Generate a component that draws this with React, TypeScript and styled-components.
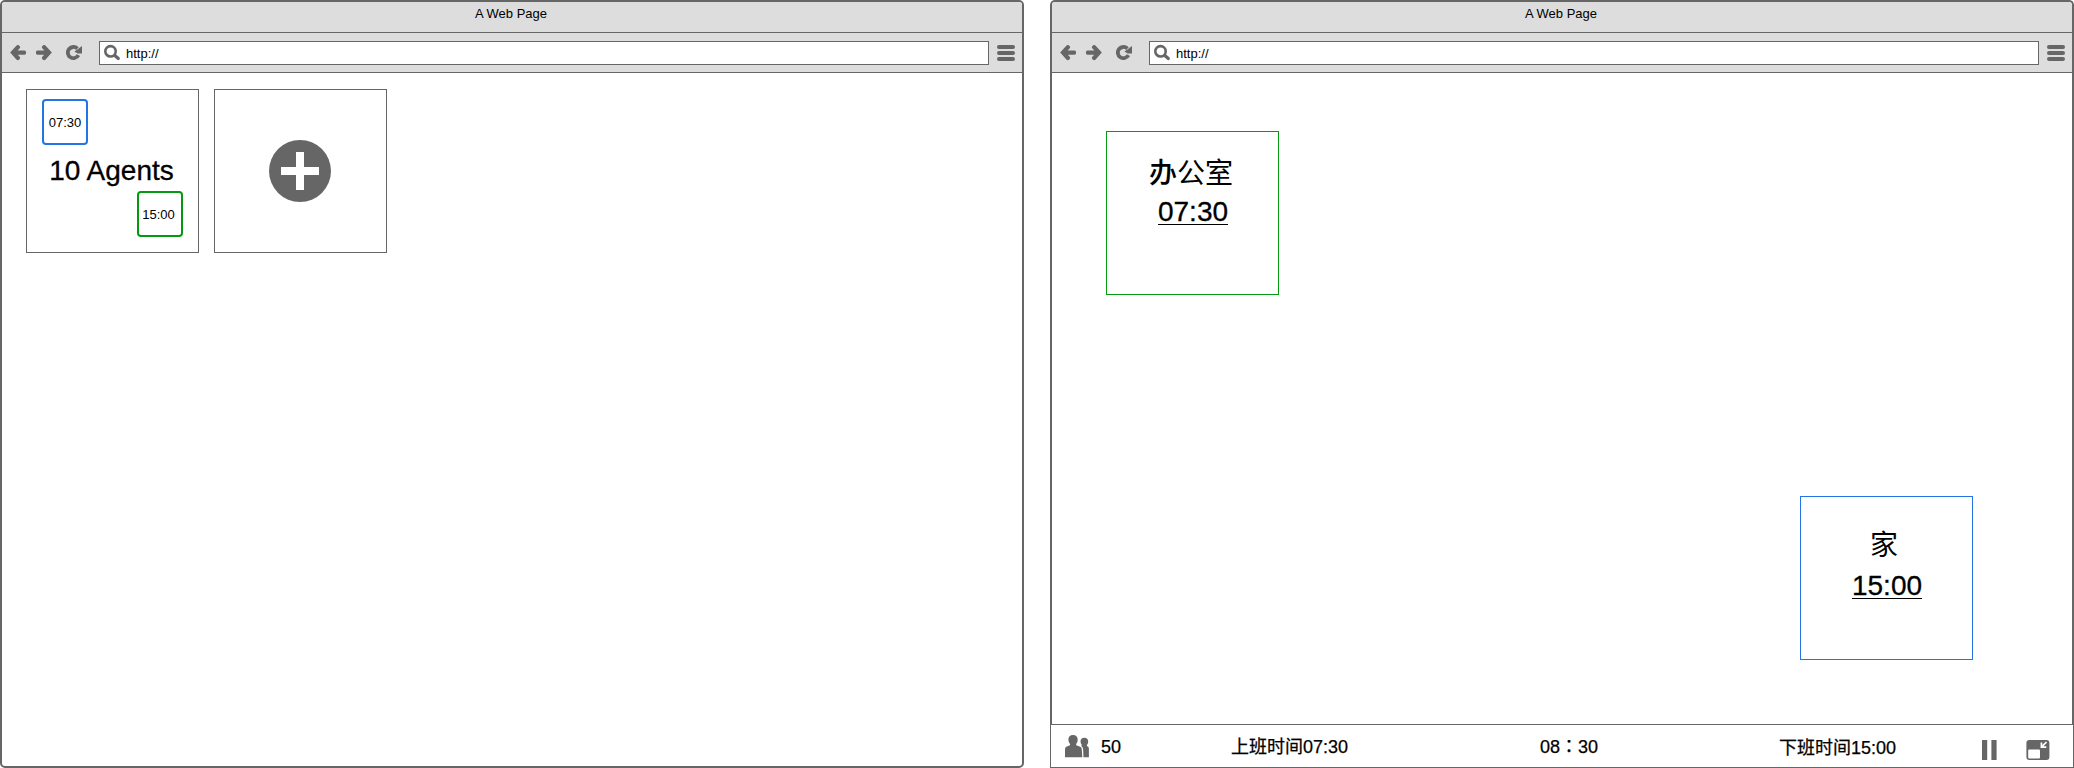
import React from "react";
import styled, { createGlobalStyle, css } from "styled-components";

const INK = "#666666";
const BLUE = "#2475e4";
const GREEN = "#039a10";

const GlobalStyle = createGlobalStyle`
  * { box-sizing: border-box; }
  body {
    margin: 0;
    background: #fff;
    color: #000;
    font-family: "Liberation Sans", "Noto Sans CJK SC", sans-serif;
  }
  svg { display: block; flex: none; }
`;

const Screen = styled.main`
  display: flex;
  gap: 26px;
  width: 2074px;
  height: 768px;
`;

const Window = styled.section<{ $flush?: boolean }>`
  display: flex;
  flex-direction: column;
  width: 1024px;
  height: 768px;
  border: 2px solid ${INK};
  border-radius: ${(p) => (p.$flush ? "5px 5px 0 0" : "5px")};
  ${(p) => p.$flush && css`border-bottom: 0;`}
`;

const TitleBar = styled.header`
  height: 31px;
  padding: 4px 2px 0 0;
  background: #ddd;
  border-bottom: 1px solid ${INK};
  border-radius: 3px 3px 0 0;
  font-size: 13px;
  line-height: 16px;
  text-align: center;
`;

const Toolbar = styled.nav`
  display: flex;
  align-items: flex-start;
  height: 40px;
  padding: 8px 7px 0 8px;
  background: #ddd;
  border-bottom: 1px solid ${INK};
`;

const NavIcons = styled.div`
  display: flex;
  align-items: center;
  gap: 10px;
  width: 89px;
  height: 24px;
`;

const ReloadSlot = styled.span`
  margin-left: 4px;
`;

const AddressBar = styled.div`
  display: flex;
  align-items: center;
  width: 890px;
  height: 24px;
  padding-left: 4px;
  gap: 5px;
  background: #fff;
  border: 1px solid ${INK};
  font-size: 13px;
  line-height: 16px;
`;

const Url = styled.span`
  padding-top: 1px;
`;

const MenuIcon = styled.div`
  display: flex;
  flex-direction: column;
  gap: 2px;
  margin: 4px 0 0 8px;
`;

const MenuBar = styled.span`
  width: 18px;
  height: 4px;
  border-radius: 2px;
  background: ${INK};
`;

const CardList = styled.div`
  display: flex;
  gap: 15px;
  padding: 16px 24px;
`;

const Card = styled.article<{ $color?: string }>`
  display: flex;
  flex-direction: column;
  align-items: center;
  width: 173px;
  height: 164px;
  border: 1px solid ${(p) => p.$color ?? INK};
`;

const AgentCard = styled(Card)`
  padding: 9px 15px;
`;

const AddCard = styled(Card)`
  padding: 50px 1px 0 0;
`;

const TimeBadge = styled.div<{ $color: string; $end?: boolean }>`
  align-self: ${(p) => (p.$end ? "flex-end" : "flex-start")};
  width: 46px;
  height: 46px;
  border: 2px solid ${(p) => p.$color};
  border-radius: 4px;
  padding-right: ${(p) => (p.$end ? "3px" : "0")};
  font-size: 13px;
  line-height: 43px;
  text-align: center;
`;

const AgentCount = styled.h2`
  margin: 0;
  padding: 8px 2px 0 0;
  height: 46px;
  font-size: 28px;
  font-weight: 400;
  line-height: 36px;
  white-space: nowrap;
  -webkit-text-stroke: 0.3px #000;
`;

const Canvas = styled.div`
  position: relative;
  flex: 1;
`;

const Place = styled(Card)<{ $x: number; $y: number; $top: number; $gap: number }>`
  position: absolute;
  left: ${(p) => p.$x}px;
  top: ${(p) => p.$y}px;
  padding-top: ${(p) => p.$top}px;
  gap: ${(p) => p.$gap}px;
`;

const PlaceName = styled.div<{ $shift: number }>`
  margin-right: ${(p) => p.$shift}px;
  font-size: 28px;
  font-weight: 400;
  line-height: 36px;
  font-family: "Noto Sans CJK SC", sans-serif;
`;

const Strong = styled.span`
  font-weight: 500;
`;

const PlaceTime = styled.div`
  height: 32px;
  margin-left: 1px;
  border-bottom: 1px solid #000;
  font-size: 28px;
  line-height: 38px;
  -webkit-text-stroke: 0.3px #000;
`;

const StatusBar = styled.footer`
  display: flex;
  align-items: center;
  flex: none;
  height: 44px;
  margin: 0 -2px;
  background: #fff;
  border: 1px solid ${INK};
  font-size: 18px;
  line-height: 24px;
  -webkit-text-stroke: 0.25px #000;
`;

const Item = styled.div<{ $w: number; $dy?: number }>`
  width: ${(p) => p.$w}px;
  flex: none;
  padding-top: ${(p) => p.$dy ?? 2}px;
  white-space: nowrap;
`;

const PeopleSlot = styled.div`
  width: 50px;
  padding-left: 9px;
`;

const Clock = styled(Item)`
  font-family: "Liberation Sans", "Noto Sans CJK TC", sans-serif;
`;

const Controls = styled.div`
  display: flex;
  gap: 20px;
`;

const ArrowIcon = ({ flip }: { flip?: boolean }) => (
  <svg width="16" height="16" viewBox="0 0 16 16">
    <path
      transform={flip ? "translate(16 0) scale(-1 1)" : undefined}
      d="M7.9 2.2 3 7.6l4.9 5.4M4 7.6h10.1"
      fill="none"
      stroke={INK}
      strokeWidth="4.2"
      strokeLinecap="round"
    />
  </svg>
);

const ReloadIcon = () => (
  <svg width="17" height="16" viewBox="0 0 17 16">
    <path d="M11.4 3.6A5.6 5.6 0 1 0 12.4 10.2" fill="none" stroke={INK} strokeWidth="3.8" />
    <path d="M16 1v7.6h-4.200L8.400 6.400l3-2Z" fill={INK} />
  </svg>
);

const SearchIcon = () => (
  <svg width="17" height="18" viewBox="0 0 17 18">
    <circle cx="6.5" cy="7.3" r="5.2" fill="none" stroke={INK} strokeWidth="2.6" />
    <path d="m10.8 11.5 3.5 3" stroke={INK} strokeWidth="3.2" strokeLinecap="round" />
  </svg>
);

const BrowserChrome = () => (
  <>
    <TitleBar>A Web Page</TitleBar>
    <Toolbar>
      <NavIcons>
        <ArrowIcon />
        <ArrowIcon flip />
        <ReloadSlot>
          <ReloadIcon />
        </ReloadSlot>
      </NavIcons>
      <AddressBar>
        <SearchIcon />
        <Url>http://</Url>
      </AddressBar>
      <MenuIcon>
        <MenuBar />
        <MenuBar />
        <MenuBar />
      </MenuIcon>
    </Toolbar>
  </>
);

const PeopleIcon = () => (
  <svg width="36" height="36" viewBox="0 0 36 36" fill={INK}>
    <path d="M13 7c3 0 4.700 1.700 4.700 4.600 0 1.800-.6 3.300-1.500 4.200v1.400l4 1.500c1.100.5 1.500 1.400 1.600 2.800l.5 7.700H5v-7c0-2 .4-3 1.800-3.600l3.200-1.400v-1.400c-1-.9-1.600-2.400-1.600-4.200C8.400 8.700 10 7 13 7Z" />
    <path d="M24.300 9.800c2.500 0 3.900 1.500 3.900 3.800 0 1.500-.5 2.700-1.300 3.500v1c1.500.5 2 1.400 2 3v8.100h-5.400l-.4-7.700c-.1-1.900-.8-2.900-2.100-3.500l.7-.6v-.7c-.8-.8-1.200-1.800-1.200-3.100 0-2.300 1.400-3.800 3.800-3.800Z" />
  </svg>
);

const PauseIcon = () => (
  <svg width="30" height="28" viewBox="0 0 30 28" fill={INK}>
    <path d="M6 8h5.200v20H6zM15.400 8h5.200v20h-5.200z" />
  </svg>
);

const MinimizeIcon = () => (
  <svg width="30" height="28" viewBox="0 0 30 28">
    <rect x="0.4" y="8" width="23" height="20" rx="3" fill={INK} />
    <rect x="2.2" y="17.4" width="11.8" height="9" rx="1" fill="#fff" />
    <path d="M20.5 10 15.6 14.9M15.400 10.400v4.800h4.900" fill="none" stroke="#fff" strokeWidth="1.7" />
  </svg>
);

export default function App() {
  return (
    <Screen>
      <GlobalStyle />
      <Window>
        <BrowserChrome />
        <CardList>
          <AgentCard>
            <TimeBadge $color={BLUE}>07:30</TimeBadge>
            <AgentCount>10 Agents</AgentCount>
            <TimeBadge $color={GREEN} $end>
              15:00
            </TimeBadge>
          </AgentCard>
          <AddCard>
            <svg width="62" height="62" viewBox="0 0 62 62">
              <circle cx="31" cy="31" r="31" fill={INK} />
              <path d="M12 31h38M31 12v38" stroke="#fff" strokeWidth="8" />
            </svg>
          </AddCard>
        </CardList>
      </Window>
      <Window $flush>
        <BrowserChrome />
        <Canvas>
          <Place $color={GREEN} $x={54} $y={58} $top={21} $gap={4}>
            <PlaceName $shift={3}>
              <Strong>办</Strong>公室
            </PlaceName>
            <PlaceTime>07:30</PlaceTime>
          </Place>
          <Place $color={BLUE} $x={748} $y={423} $top={28} $gap={6}>
            <PlaceName $shift={5}>家</PlaceName>
            <PlaceTime>15:00</PlaceTime>
          </Place>
        </Canvas>
        <StatusBar>
          <PeopleSlot>
            <PeopleIcon />
          </PeopleSlot>
          <Item $w={130}>50</Item>
          <Item $w={309}>上班时间07:30</Item>
          <Clock $w={239}>08：30</Clock>
          <Item $w={197} $dy={4}>下班时间15:00</Item>
          <Controls>
            <PauseIcon />
            <MinimizeIcon />
          </Controls>
        </StatusBar>
      </Window>
    </Screen>
  );
}
